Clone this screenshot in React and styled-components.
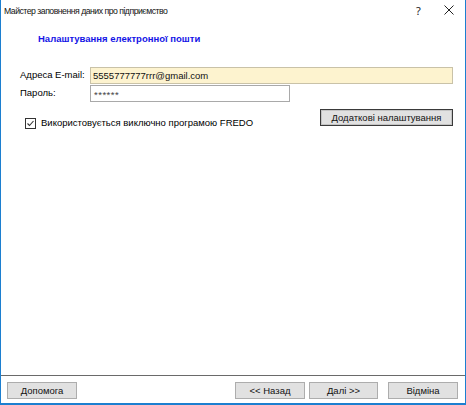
import styled, { createGlobalStyle } from "styled-components";

const GlobalStyle = createGlobalStyle`
	html, body {
		margin: 0;
		padding: 0;
		background: #ffffff;
	}
	* {
		box-sizing: border-box;
	}
`;

function CheckIcon() {
	return (
		<svg width="11" height="11" viewBox="0 0 11 11">
			<rect x="0.5" y="0.5" width="10" height="10" fill="#ffffff" stroke="#333333" />
			<path d="M2.5 5.5 L4.5 7.5 L8.5 3" fill="none" stroke="#333333" strokeWidth="1.1" />
		</svg>
	);
}

function CloseIcon() {
	return (
		<svg width="10" height="10" viewBox="0 0 10 10">
			<path d="M0.5 0.5 L9.5 9.5 M9.5 0.5 L0.5 9.5" stroke="#222222" strokeWidth="1" />
		</svg>
	);
}

export default function App() {
	return (
		<>
			<GlobalStyle />
			<Window>
				<TitleBar>
					<Title>Майстер заповнення даних про підприємство</Title>
					<CaptionButton $shift={3}>?</CaptionButton>
					<CaptionButton>
						<CloseIcon />
					</CaptionButton>
				</TitleBar>
				<Content>
					<Heading>Налаштування електронної пошти</Heading>
					<Form>
						<Label>Адреса E-mail:</Label>
						<Input $highlight>5555777777rrr@gmail.com</Input>
						<Label>Пароль:</Label>
						<Input $width={200} $secret>******</Input>
					</Form>
					<Options>
						<CheckRow>
							<CheckIcon />
							<span>Використовується виключно програмою FREDO</span>
						</CheckRow>
						<Button $focused $width={133}>Додаткові налаштування</Button>
					</Options>
				</Content>
				<Footer>
					<Button $width={70}>Допомога</Button>
					<Spacer />
					<Button $width={70}>&lt;&lt; Назад</Button>
					<Button $width={69} $gap={4}>Далі &gt;&gt;</Button>
					<Button $width={70} $gap={10}>Відміна</Button>
				</Footer>
			</Window>
		</>
	);
}

const Window = styled.div`
	width: 466px;
	height: 405px;
	display: flex;
	flex-direction: column;
	background: #ffffff;
	border: 1px solid #1c7fd0;
	border-top: none;
	border-bottom-width: 2px;
	font-family: "Liberation Sans", Arial, sans-serif;
	font-size: 9.5px;
	color: #000000;
`;

const TitleBar = styled.div`
	height: 20px;
	display: flex;
	align-items: center;
	padding-left: 3px;
`;

const Title = styled.div`
	flex: 1;
	font-family: "Liberation Sans", Arial, sans-serif;
	font-size: 8.7px;
	letter-spacing: -0.5px;
	color: #111111;
	padding-top: 1px;
`;

const CaptionButton = styled.div`
	width: 32px;
	height: 20px;
	display: flex;
	align-items: center;
	justify-content: center;
	padding-left: ${(p) => (p.$shift ? `${p.$shift}px` : "0")};
	font-family: "Noto Sans", sans-serif;
	font-size: 11px;
	color: #222222;
`;

const Content = styled.div`
	flex: 1;
	padding: 0 12px 0 19px;
	display: flex;
	flex-direction: column;
`;

const Heading = styled.div`
	margin: 12px 0 0 18px;
	font-weight: bold;
	line-height: 13px;
	color: #1414e6;
`;

const Form = styled.div`
	margin-top: 22px;
	display: grid;
	grid-template-columns: 70px 1fr;
	row-gap: 1px;
	align-items: center;
`;

const Label = styled.div`
	line-height: 12px;
	margin-top: -2px;
	white-space: nowrap;
`;

const Input = styled.div`
	height: 17px;
	width: ${(p) => (p.$width ? `${p.$width}px` : "auto")};
	border: 1px solid ${(p) => (p.$highlight ? "#c9c2a8" : "#a9a9a9")};
	background: ${(p) => (p.$highlight ? "#fdf3cf" : "#ffffff")};
	padding: ${(p) => (p.$secret ? "2px 0 0 3px" : "1px 0 0 2px")};
	line-height: 14px;
	letter-spacing: ${(p) => (p.$secret ? "0.5px" : "0")};
	color: ${(p) => (p.$secret ? "#444444" : "#111111")};
`;

const Options = styled.div`
	margin-top: 7px;
	display: flex;
	justify-content: space-between;
	align-items: flex-start;
`;

const CheckRow = styled.div`
	margin: 8px 0 0 5px;
	display: flex;
	align-items: center;
	gap: 5px;
	line-height: 12px;
`;

const Button = styled.div`
	width: ${(p) => p.$width}px;
	height: 17px;
	margin-left: ${(p) => (p.$gap ? `${p.$gap}px` : "0")};
	display: flex;
	align-items: center;
	justify-content: center;
	background: #e1e1e1;
	border: 1px solid ${(p) => (p.$focused ? "#3a3a3a" : "#adadad")};
	box-shadow: ${(p) => (p.$focused ? "inset 0 0 0 1px #c4c4c4" : "none")};
	color: #111111;
	white-space: nowrap;
`;

const Footer = styled.div`
	height: 28px;
	border-top: 1px solid #6a6a6a;
	display: flex;
	align-items: flex-start;
	padding: 6px 7px 0 6px;
`;

const Spacer = styled.div`
	flex: 1;
`;
